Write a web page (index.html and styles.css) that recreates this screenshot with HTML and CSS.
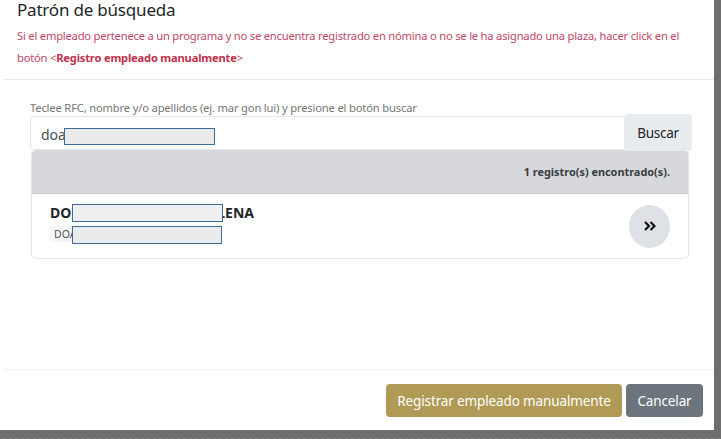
FILE: index.html
```html
<!DOCTYPE html>
<html lang="es">
<head>
<meta charset="utf-8">
<title>Patrón de búsqueda</title>
<link rel="stylesheet" href="styles.css">
</head>
<body>
<div class="modal">
  <header class="modal-header">
    <h1 class="title">Patrón de búsqueda</h1>
    <p class="note">Si el empleado pertenece a un programa y no se encuentra registrado en nómina o no se le ha asignado una plaza, hacer click en el botón &lt;<strong>Registro empleado manualmente</strong>&gt;</p>
  </header>
  <main class="modal-body">
    <label class="hint">Teclee RFC, nombre y/o apellidos (ej. mar gon lui) y presione el botón buscar</label>
    <div class="search">
      <div class="input"><span>doa</span><span class="mask mask-input"></span></div>
      <button class="search-btn">Buscar</button>
    </div>
    <section class="results">
      <div class="results-head">1 registro(s) encontrado(s).</div>
      <div class="result-row">
        <div class="person">
          <div class="name"><span>DO</span><span class="mask mask-name"></span><span>LENA</span></div>
          <div class="rfc-line"><span class="rfc">DOA</span><span class="mask mask-rfc"></span></div>
        </div>
        <button class="go" aria-label="Seleccionar">
          <svg viewBox="0 0 12 10" width="12" height="10"><path d="M1 1l4 4-4 4M6.5 1l4 4-4 4" fill="none" stroke="#111" stroke-width="2.2"/></svg>
        </button>
      </div>
    </section>
  </main>
  <footer class="modal-footer">
    <button class="btn btn-gold">Registrar empleado manualmente</button>
    <button class="btn btn-gray">Cancelar</button>
  </footer>
</div>
</body>
</html>
```

FILE: styles.css
```css
* { box-sizing: border-box; }
html, body { margin: 0; height: 100%; }
body {
  width: 721px;
  height: 439px;
  overflow: hidden;
  background: repeating-linear-gradient(90deg, #6e6e6e 0 3px, #858585 3px 6px) bottom / 100% 1px no-repeat, #6e6e6e;
  font-family: "Noto Sans", "Open Sans", sans-serif;
  color: #212529;
}
.modal {
  width: 714px;
  height: 430px;
  background: #fff;
  display: flex;
  flex-direction: column;
}
.modal-header {
  height: 80px;
  margin-left: 4px;
  padding: 0 13px;
  border-bottom: 1px solid #e9ecef;
}
.title {
  margin: 0;
  font-size: 17px;
  font-weight: 400;
  letter-spacing: -0.2px;
  line-height: 20px;
}
.note {
  margin: 5px 0 0;
  font-size: 11.2px;
  letter-spacing: -0.21px;
  line-height: 22px;
  color: #c0486a;
}
.note strong { font-weight: 700; color: #c2304c; }
.modal-body {
  flex: 1;
  padding: 20px 25px 0 30px;
}
.hint {
  display: block;
  font-size: 11.2px;
  letter-spacing: -0.17px;
  line-height: 16px;
  color: #777;
}
.search {
  display: flex;
  height: 34px;
  margin-right: -3px;
}
.input {
  flex: 1;
  position: relative;
  display: flex;
  align-items: center;
  padding: 2px 0 0 10px;
  font-size: 14px;
  color: #495057;
  border: 1px solid #e6e8ea;
  border-right: 0;
  border-radius: 4px 0 0 4px;
}
.search-btn {
  width: 68px;
  height: 37px;
  margin-top: -2px;
  border: 0;
  border-radius: 4px;
  background: #e9ecef;
  color: #212529;
  font: 400 13.5px "Noto Sans", "Open Sans", sans-serif;
  letter-spacing: -0.25px;
}
.results {
  height: 109px;
  margin-left: 1px;
  border: 1px solid #e6e7e9;
  border-top: 0;
  border-radius: 5px;
  overflow: hidden;
}
.results-head {
  height: 44px;
  padding-right: 18px;
  display: flex;
  align-items: center;
  justify-content: flex-end;
  background: #d6d8db;
  border-bottom: 1px solid #c6c8cb;
  font-size: 10.9px;
  font-weight: 700;
  color: #383d41;
}
.result-row {
  height: 64px;
  display: flex;
  align-items: center;
  justify-content: space-between;
  padding: 0 18px;
}
.person {
  align-self: flex-start;
  margin-top: 9px;
  display: flex;
  flex-direction: column;
  gap: 3px;
}
.name {
  position: relative;
  display: flex;
  font-size: 14px;
  font-weight: 700;
  line-height: 20px;
  color: #212529;
  width: 204px;
}
.name span:last-child { margin-left: auto; }
.rfc-line { position: relative; width: 172px; }
.rfc {
  display: block;
  width: 60px;
  padding-left: 4px;
  font-size: 10.5px;
  line-height: 16px;
  color: #555;
  background: #f6f6f6;
  overflow: hidden;
}
.mask {
  position: absolute;
  display: block;
  border: 1px solid #3f6a92;
  background: #eeeeee;
}
.mask-input { left: 33px; top: 11px; width: 151px; height: 17px; background: #ebebeb; }
.mask-name { left: 22px; top: 1px; width: 151px; height: 18px; background: #efeef0; }
.mask-rfc { left: 22px; top: 0; width: 150px; height: 18px; background: #e9ebec; }
.go {
  width: 41px;
  height: 43px;
  border: 0;
  border-radius: 50%;
  background: #dee2e6;
  display: flex;
  align-items: center;
  justify-content: center;
  padding: 0;
}
.modal-footer {
  height: 61px;
  margin-left: 4px;
  padding: 14px 11px 0 0;
  border-top: 1px solid #eeeeee;
  display: flex;
  justify-content: flex-end;
  gap: 4px;
}
.btn {
  height: 33px;
  border: 0;
  border-radius: 4px;
  color: #fff;
  font: 400 13.5px "Noto Sans", "Open Sans", sans-serif;
  letter-spacing: -0.13px;
  padding: 0;
}
.btn-gold { width: 236px; background: #b09a56; }
.btn-gray { width: 77px; background: #6c757d; }
```
